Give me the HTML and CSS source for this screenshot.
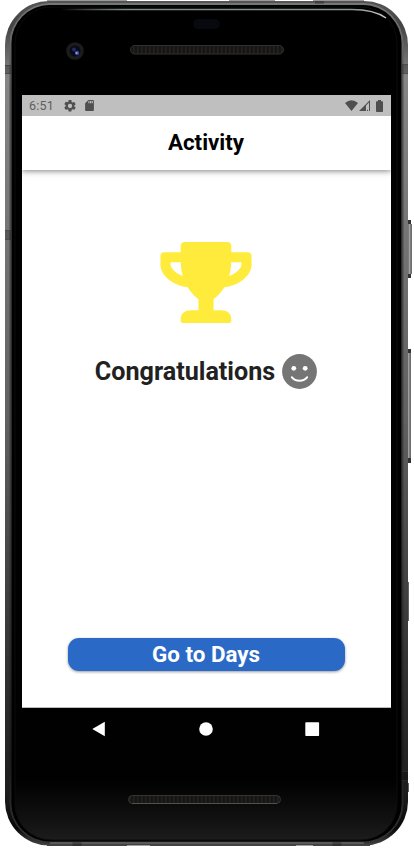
FILE: index.html
```html
<!DOCTYPE html>
<html lang="en">
<head>
<meta charset="utf-8">
<title>Activity</title>
<link rel="stylesheet" href="styles.css">
</head>
<body>
<div class="phone">
  <svg class="shell" viewBox="0 0 414 850" aria-hidden="true">
    <defs>
      <linearGradient id="rim" x1="0" y1="0" x2="0" y2="1">
        <stop offset="0" stop-color="#555"/><stop offset=".03" stop-color="#444"/><stop offset=".09" stop-color="#858585"/><stop offset=".25" stop-color="#777"/><stop offset=".5" stop-color="#606060"/><stop offset=".78" stop-color="#333"/><stop offset=".94" stop-color="#1c1c1c"/><stop offset=".98" stop-color="#080808"/><stop offset="1" stop-color="#444"/>
      </linearGradient>
      <linearGradient id="band" x1="0" y1="0" x2="0" y2="1">
        <stop offset="0" stop-color="#777"/><stop offset=".1" stop-color="#505050"/><stop offset=".6" stop-color="#3a3a3a"/><stop offset=".9" stop-color="#1b1b1b"/><stop offset="1" stop-color="#333"/>
      </linearGradient>
      <linearGradient id="glass" x1="0" y1="0" x2="0" y2="1">
        <stop offset="0" stop-color="#000"/><stop offset=".93" stop-color="#010101"/><stop offset=".975" stop-color="#111"/><stop offset="1" stop-color="#1c1c1c"/>
      </linearGradient>
      <linearGradient id="shine"><stop offset="0" stop-color="#aeb8b8" stop-opacity="0"/><stop offset=".2" stop-color="#7e8989"/><stop offset=".9" stop-color="#8b9696"/><stop offset="1" stop-color="#ccc"/></linearGradient>
      <pattern id="mesh" width="4" height="5" patternUnits="userSpaceOnUse"><rect width="4" height="5" fill="#171614"/><rect x="1" width="1.5" height="5" fill="#24221f"/></pattern>
      <linearGradient id="key"><stop offset="0" stop-color="#555"/><stop offset=".3" stop-color="#b0b0b0"/><stop offset=".5" stop-color="#858585"/><stop offset="1" stop-color="#666"/></linearGradient>
    </defs>
    <path d="M47 .5H127M229 .5H275M313 .5H364" stroke="#999"/>
    <rect x="407" y="220" width="4" height="58" fill="#333"/><rect x="408" y="224" width="4" height="50" fill="url(#key)"/>
    <rect x="406" y="349" width="5" height="114" fill="#333"/><rect x="407" y="353" width="4" height="105" fill="url(#key)"/>
    <path d="M408 582V621M408 783V792" stroke="#303030" stroke-width="1.500"/>
    <rect x="5" y="1" width="403" height="844.500" rx="44" fill="url(#rim)"/>
    <rect x="10.500" y="4" width="392" height="838.500" rx="40" fill="none" stroke="url(#band)" stroke-width="2"/>
    <rect x="11.500" y="5" width="390" height="836.500" rx="38" fill="#000"/>
    <rect x="15" y="7" width="382" height="833" rx="36" fill="url(#glass)" stroke="#0c0c0c"/>
    <path d="M60 9.500H352Q374 9.500 386 18" fill="none" stroke="url(#shine)" stroke-width="1.300"/>
    <path d="M50 843H364" stroke="#666" stroke-width="1.500"/>
    <path d="M47 845.500H127M150 845.500H296M313 845.500H370" stroke="#444"/>
    <path d="M5 69.500H11M5 235H11M402 69H408M402 776H408M319.500 1V4M77 842V846M337 842V846" stroke="#000" stroke-opacity=".25" stroke-width="9"/>
    <path d="M5 65.500H11M5 73.500H11M5 230.500H11M5 239.500H11M402 64.500H408M402 73.500H408M402 771.500H408M402 780.500H408" stroke="#333" stroke-opacity=".5"/>
    <rect x="193" y="19" width="27" height="10" rx="5" fill="#08090e"/>
    <circle cx="75" cy="51" r="8.800" fill="#1c1c1e"/><circle cx="75" cy="51" r="5.400" fill="#090a12"/><circle cx="74" cy="49.500" r="2" fill="#202b68"/><circle cx="77" cy="53" r="2.200" fill="#3349a4"/><circle cx="76.600" cy="53" r="1" fill="#92a7f5"/>
    <rect x="130.500" y="45.500" width="153" height="8.500" rx="4.250" fill="url(#mesh)" stroke="#303030"/>
    <rect x="128.500" y="795.500" width="152" height="8" rx="4" fill="url(#mesh)" stroke="#343432"/>
    <path d="M132 803.500H277" stroke="#50524e"/>
  </svg>

  <main class="screen">
    <div class="status">
      <span class="time">6:51</span>
      <svg class="gear" viewBox="2 2 20 20"><path d="M19.14 12.94c.04-.3.06-.61.06-.94s-.02-.64-.07-.94l2.03-1.58a.49.49 0 0 0 .12-.61l-1.92-3.32a.49.49 0 0 0-.59-.22l-2.39.96c-.5-.38-1.03-.7-1.62-.94l-.36-2.54A.48.48 0 0 0 13.92 2h-3.84a.47.47 0 0 0-.47.41l-.36 2.54c-.59.24-1.13.57-1.62.94l-2.39-.96a.48.48 0 0 0-.59.22L2.74 8.47a.47.47 0 0 0 .12.61l2.03 1.58c-.05.3-.09.63-.09.94s.02.64.07.94l-2.03 1.58a.49.49 0 0 0-.12.61l1.92 3.32c.12.22.37.29.59.22l2.39-.96c.5.38 1.03.7 1.62.94l.36 2.54c.05.24.24.41.48.41h3.84c.24 0 .44-.17.47-.41l.36-2.54c.59-.24 1.13-.56 1.62-.94l2.39.96c.22.08.47 0 .59-.22l1.92-3.32a.47.47 0 0 0-.12-.61zM12 15.6a3.6 3.6 0 1 1 0-7.2 3.6 3.6 0 0 1 0 7.2z"/></svg>
      <svg class="card" viewBox="4 2 16 20"><path d="M18 2h-8L4.020 8 4 20c0 1.100.9 2 2 2h12c1.100 0 2-.9 2-2V4c0-1.100-.9-2-2-2zm-6 6h-2V4h2v4zm3 0h-2V4h2v4zm3 0h-2V4h2v4z"/></svg>
      <svg class="wifi" viewBox="0 0 13 11"><path d="M0 3Q6.500-2.500 13 3L6.500 11z"/></svg>
      <svg class="signal" viewBox="0 0 11 11"><path d="M0 11 11 0V11H10V2.600L7 5.600V11zM8 9.800H9V11H8z"/></svg>
      <svg class="battery" viewBox="0 0 7 12"><path d="M2 0H5V1.200H6.200Q7 1.200 7 2V11.200Q7 12 6.200 12H.8Q0 12 0 11.200V2Q0 1.200.8 1.200H2z"/></svg>
    </div>
    <header class="bar"><h1>Activity</h1></header>
    <section class="content">
      <svg class="trophy" viewBox="0 0 576 512"><path d="M552 64H448V24c0-13.300-10.700-24-24-24H152c-13.300 0-24 10.700-24 24v40H24C10.700 64 0 74.700 0 88v56c0 35.700 22.500 72.400 61.900 100.700 31.500 22.700 69.800 37.100 110 41.700C203.300 338.500 240 360 240 360v72h-48c-35.300 0-64 20.700-64 56v12c0 6.600 5.400 12 12 12h296c6.600 0 12-5.400 12-12v-12c0-35.300-28.700-56-64-56h-48v-72s36.700-21.500 68.100-73.600c40.300-4.600 78.600-19 110-41.700 39.300-28.300 61.900-65 61.900-100.700V88c0-13.300-10.700-24-24-24zM99.300 192.800C74.900 175.200 64 155.600 64 144v-16h64.200c1 32.600 5.800 61.200 12.800 86.200-15.100-5.200-29.200-12.400-41.700-21.400zM512 144c0 16.100-17.700 36.100-35.300 48.800-12.500 9-26.700 16.200-41.800 21.400 7-25 11.800-53.600 12.800-86.200H512v16z"/></svg>
      <div class="message">
        <h2>Congratulations</h2>
        <svg class="smile" viewBox="0 0 35 35"><circle cx="17.500" cy="17.500" r="17.400" fill="#757575"/><circle cx="11.800" cy="14.300" r="2.400" fill="#fff"/><circle cx="23.200" cy="14.300" r="2.400" fill="#fff"/><path d="M9.800 23.200Q12.500 26.800 17.500 26.800T25.200 23.200" fill="none" stroke="#fff" stroke-width="2" stroke-linecap="round"/></svg>
      </div>
      <button class="go" type="button">Go to Days</button>
    </section>
  </main>

  <nav class="keys">
    <svg viewBox="0 0 16 16"><path d="M1.300 8 13.800.8V15.200z"/></svg>
    <svg viewBox="0 0 16 16"><circle cx="8" cy="8" r="6.800"/></svg>
    <svg viewBox="0 0 16 16"><rect x="1.300" y="1.200" width="13.800" height="13.800" rx=".7"/></svg>
  </nav>
</div>
</body>
</html>
```
FILE: styles.css
```css
* { box-sizing: border-box; }
body { margin: 0; background: #fff; font-family: Roboto, "Liberation Sans", sans-serif; }
svg { display: block; flex: none; }
h1, h2 { margin: 0; }

.phone { position: relative; width: 414px; height: 850px; padding: 95px 23px 0 22px; overflow: hidden; }
.shell { position: absolute; top: 0; left: 0; width: 414px; height: 850px; }

.screen { position: relative; display: flex; flex-direction: column; height: 613px; background: #fff; border-bottom: 1px solid #bbb; }
.status { display: flex; align-items: center; height: 21px; padding: 0 7px 0 7px; background: #bfbfbf; color: #5e5e5e; fill: #4f4f4f; }
.time { width: 34.5px; font-size: 12.5px; letter-spacing: .2px; line-height: 21px; }
.gear { width: 12px; height: 12px; }
.card { width: 9px; height: 11px; margin-left: 9px; }
.wifi { width: 13px; height: 11px; margin-left: auto; }
.signal { width: 11px; height: 11px; margin-left: 1px; }
.battery { width: 7px; height: 12px; margin: 0 1px 0 6px; }

.bar { display: flex; align-items: center; justify-content: center; height: 54px; padding: 0 1px 3px 0; background: #fff; box-shadow: 0 1px 6px rgba(0, 0, 0, .5); clip-path: inset(0 0 -10px 0); }
.bar h1 { font-size: 22.3px; font-weight: 700; line-height: 26px; color: #000; }

.content { display: flex; flex: 1; flex-direction: column; align-items: center; padding: 72px 46px 36px 46px; }
.trophy { width: 92px; height: 81px; margin-right: 2px; fill: #ffeb3b; }
.message { display: flex; align-items: center; gap: 7px; height: 36px; margin: 30px 1px 0 0; }
.message h2 { padding-top: 1px; font-size: 25.15px; font-weight: 700; line-height: 30px; color: #212121; }
.smile { width: 35px; height: 35px; }
.go { width: 277px; height: 33px; margin-top: auto; padding: 0 1px 0 0; border: 0; border-radius: 11px; background: #2a6ac6; box-shadow: 0 1px 3px rgba(0, 0, 0, .4); color: #fff; font: 700 22.4px/33px Roboto, "Liberation Sans", sans-serif; }

.keys { position: relative; display: flex; justify-content: space-between; padding: 13px 71px 0 69px; fill: #fff; }
.keys svg { width: 16px; height: 16px; }
```
